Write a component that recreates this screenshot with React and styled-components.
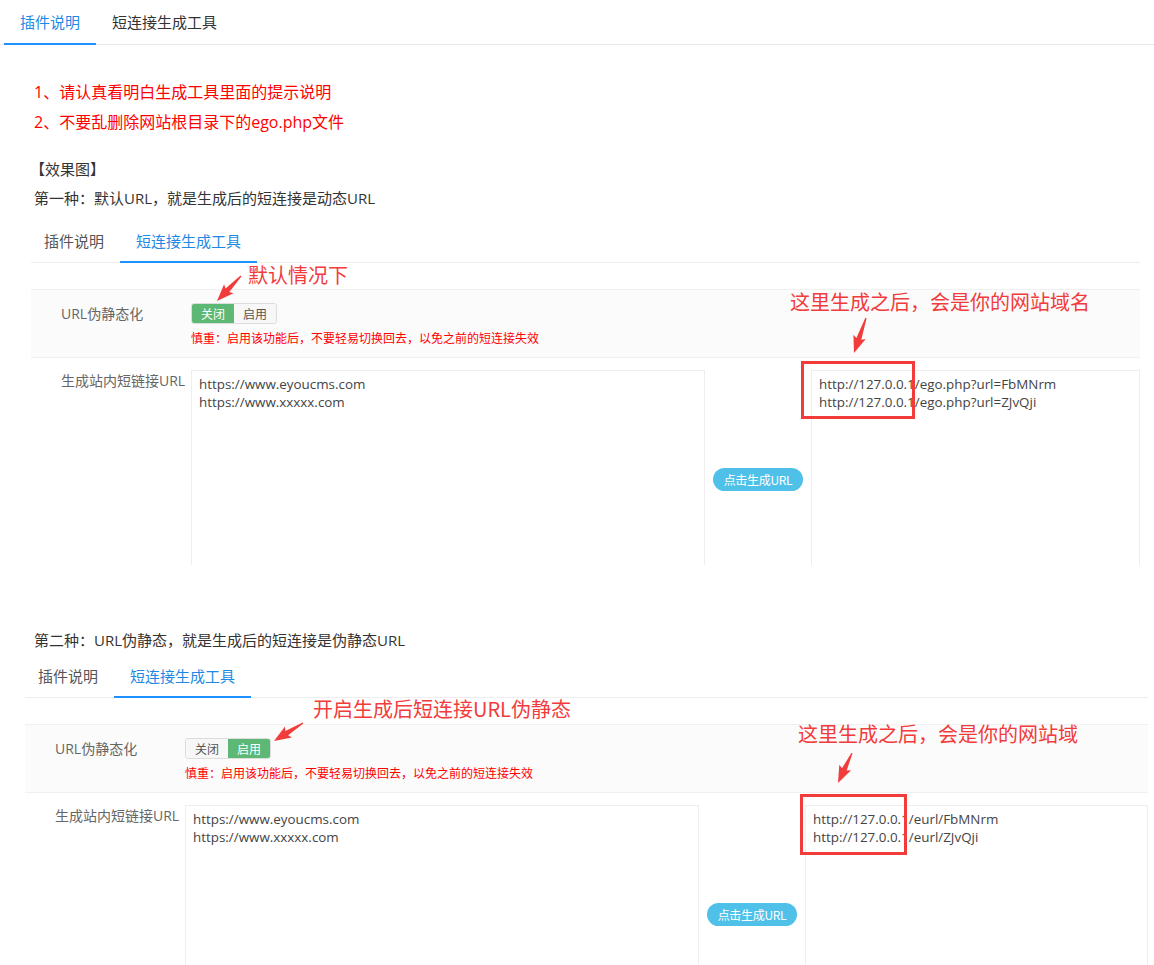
import React from 'react';
import styled, { createGlobalStyle } from 'styled-components';

const GlobalStyle = createGlobalStyle`
  html, body {
    margin: 0;
    padding: 0;
    background: #fff;
  }
  body {
    font-family: "Open Sans", "Noto Sans CJK SC", sans-serif;
    font-size: 14px;
    color: #333;
  }
`;

const Page = styled.div`
  width: 1154px;
  height: 965px;
  overflow: hidden;
`;

const TopTabs = styled.div`
  display: flex;
  height: 44px;
  padding-left: 4px;
  border-bottom: 1px solid #e8e8e8;
`;

const TopTab = styled.div`
  display: flex;
  align-items: center;
  padding: 0 16px;
  font-size: 15px;
  color: ${(p) => (p.active ? '#1e88e5' : '#333')};
  border-bottom: 2px solid ${(p) => (p.active ? '#1e90ff' : 'transparent')};
  margin-bottom: -1px;
`;

const Content = styled.div`
  padding: 32px 0 0 34px;
`;

const Notice = styled.p`
  margin: 0;
  font-size: 16px;
  line-height: 30px;
  color: #ff0000;
`;

const Para = styled.p`
  margin: 0;
  font-size: 15px;
  line-height: 29px;
  color: #333;
  margin-left: ${(p) => p.indent || 0}px;
`;

const Shot = styled.div`
  position: relative;
  width: ${(p) => p.w}px;
  height: ${(p) => p.h}px;
  margin-left: ${(p) => p.offset}px;
  margin-top: ${(p) => p.top || 0}px;
  overflow: hidden;
`;

const ShotTabs = styled.div`
  display: flex;
  height: 42px;
  border-bottom: 1px solid #eeeeee;
`;

const ShotTab = styled.div`
  display: flex;
  align-items: center;
  padding: 0 16px 0 ${(p) => (p.first ? 13 : 16)}px;
  font-size: 15px;
  color: ${(p) => (p.active ? '#1e88e5' : '#555')};
  border-bottom: 2px solid ${(p) => (p.active ? '#1e90ff' : 'transparent')};
  margin-bottom: -1px;
`;

const FormRow = styled.div`
  display: flex;
  background: ${(p) => (p.shaded ? '#fbfbfb' : '#fff')};
  border-top: ${(p) => (p.shaded ? '1px solid #f0f0f0' : 'none')};
  border-bottom: ${(p) => (p.shaded ? '1px solid #f0f0f0' : 'none')};
  margin-top: ${(p) => p.gap || 0}px;
  padding: ${(p) => (p.shaded ? '13px 0 10px' : '12px 0 0')};
`;

const Label = styled.div`
  width: 130px;
  padding-left: 30px;
  flex-shrink: 0;
  font-size: 14px;
  line-height: 21px;
  color: #666;
`;

const Field = styled.div`
  display: flex;
  flex-direction: column;
  gap: 7px;
`;

const Toggle = styled.div`
  display: flex;
  width: 86px;
  height: 21px;
  border: 1px solid #ddd;
  border-radius: 3px;
  overflow: hidden;
  box-sizing: border-box;
`;

const ToggleOpt = styled.div`
  flex: 1;
  display: flex;
  align-items: center;
  justify-content: center;
  font-size: 12px;
  color: ${(p) => (p.on ? '#fff' : '#555')};
  background: ${(p) => (p.on ? '#5cb874' : '#f7f7f7')};
`;

const Warn = styled.div`
  font-size: 12px;
  line-height: 16px;
  color: #ff0000;
`;

const Area = styled.div`
  box-sizing: border-box;
  width: ${(p) => (p.w ? `${p.w}px` : 'auto')};
  flex: ${(p) => (p.w ? '0 0 auto' : '1')};
  height: 218px;
  border: 1px solid #eeeeee;
  padding: 4px 7px;
  font-size: 13.4px;
  line-height: 18px;
  color: #444;
  white-space: pre-line;
`;

const BtnCol = styled.div`
  width: 106px;
  height: 218px;
  flex-shrink: 0;
  display: flex;
  align-items: center;
  justify-content: center;
`;

const GenButton = styled.button`
  width: 90px;
  height: 23px;
  padding: 0;
  border: none;
  border-radius: 12px;
  background: #4fc1e9;
  color: #fff;
  font-family: "Noto Sans CJK SC", sans-serif;
  font-size: 12px;
  letter-spacing: -0.3px;
  cursor: pointer;
`;

const Note = styled.div`
  position: absolute;
  left: ${(p) => p.x}px;
  top: ${(p) => p.y}px;
  font-family: "Noto Sans CJK SC", sans-serif;
  font-size: 20px;
  line-height: 26px;
  color: #f23c3c;
  white-space: nowrap;
`;

const Mark = styled.div`
  position: absolute;
  left: ${(p) => p.x}px;
  top: ${(p) => p.y}px;
  width: ${(p) => p.w}px;
  height: ${(p) => p.h}px;
  border: 3px solid #f23c3c;
  box-sizing: border-box;
`;

const Overlay = styled.svg`
  position: absolute;
  left: 0;
  top: 0;
  width: 100%;
  height: 100%;
  pointer-events: none;
`;

function arrowPoints(x1, y1, x2, y2) {
  const dx = x2 - x1;
  const dy = y2 - y1;
  const len = Math.hypot(dx, dy);
  const ux = dx / len;
  const uy = dy / len;
  const nx = -uy;
  const ny = ux;
  const head = 15;
  const neckX = x2 - ux * head;
  const neckY = y2 - uy * head;
  const pts = [
    [x1 + nx * 0.6, y1 + ny * 0.6],
    [neckX + nx * 2.6, neckY + ny * 2.6],
    [neckX - ux * 2 + nx * 6.5, neckY - uy * 2 + ny * 6.5],
    [x2, y2],
    [neckX - ux * 2 - nx * 6.5, neckY - uy * 2 - ny * 6.5],
    [neckX - nx * 2.6, neckY - ny * 2.6],
    [x1 - nx * 0.6, y1 - ny * 0.6],
  ];
  return pts.map((p) => p.map((v) => v.toFixed(1)).join(',')).join(' ');
}

const Arrow = ({ from, to }) => (
  <polygon points={arrowPoints(from[0], from[1], to[0], to[1])} fill="#f23c3c" />
);

const ToolShot = ({ mode, left, right, width, height, offset, top, notes, arrows, box }) => (
  <Shot w={width} h={height} offset={offset} top={top}>
    <ShotTabs>
      <ShotTab first>插件说明</ShotTab>
      <ShotTab active>短连接生成工具</ShotTab>
    </ShotTabs>
    <FormRow shaded gap={26}>
      <Label>URL伪静态化</Label>
      <Field>
        <Toggle>
          <ToggleOpt on={mode === 'off'}>关闭</ToggleOpt>
          <ToggleOpt on={mode === 'on'}>启用</ToggleOpt>
        </Toggle>
        <Warn>慎重：启用该功能后，不要轻易切换回去，以免之前的短连接失效</Warn>
      </Field>
    </FormRow>
    <FormRow>
      <Label>生成站内短链接URL</Label>
      <Area w={514}>{left}</Area>
      <BtnCol>
        <GenButton>点击生成URL</GenButton>
      </BtnCol>
      <Area>{right}</Area>
    </FormRow>
    {notes.map((n) => (
      <Note key={n.text} x={n.x} y={n.y}>{n.text}</Note>
    ))}
    <Mark x={box.x} y={box.y} w={box.w} h={box.h} />
    <Overlay>
      {arrows.map((a, i) => (
        <Arrow key={i} from={a[0]} to={a[1]} />
      ))}
    </Overlay>
  </Shot>
);

const inputUrls = 'https://www.eyoucms.com\nhttps://www.xxxxx.com';

export default function App() {
  return (
    <Page>
      <GlobalStyle />
      <TopTabs>
        <TopTab active>插件说明</TopTab>
        <TopTab>短连接生成工具</TopTab>
      </TopTabs>
      <Content>
        <Notice>1、请认真看明白生成工具里面的提示说明</Notice>
        <Notice>2、不要乱删除网站根目录下的ego.php文件</Notice>
        <Para indent={-4} style={{ marginTop: 18 }}>【效果图】</Para>
        <Para>第一种：默认URL，就是生成后的短连接是动态URL</Para>
      </Content>
      <ToolShot
        mode="off"
        width={1109}
        height={345}
        offset={31}
        top={7}
        left={inputUrls}
        right={'http://127.0.0.1/ego.php?url=FbMNrm\nhttp://127.0.0.1/ego.php?url=ZJvQji'}
        notes={[
          { text: '默认情况下', x: 217, y: 42 },
          { text: '这里生成之后，会是你的网站域名', x: 759, y: 69 },
        ]}
        arrows={[
          [[210, 56], [186, 81]],
          [[835, 98], [823, 133]],
        ]}
        box={{ x: 770, y: 141, w: 114, h: 58 }}
      />
      <Content style={{ paddingTop: 61 }}>
        <Para>第二种：URL伪静态，就是生成后的短连接是伪静态URL</Para>
      </Content>
      <ToolShot
        mode="on"
        width={1123}
        height={311}
        offset={25}
        left={inputUrls}
        right={'http://127.0.0.1/eurl/FbMNrm\nhttp://127.0.0.1/eurl/ZJvQji'}
        notes={[
          { text: '开启生成后短连接URL伪静态', x: 288, y: 41 },
          { text: '这里生成之后，会是你的网站域', x: 773, y: 66 },
        ]}
        arrows={[
          [[278, 68], [249, 86]],
          [[827, 98], [813, 128]],
        ]}
        box={{ x: 775, y: 139, w: 107, h: 61 }}
      />
    </Page>
  );
}
